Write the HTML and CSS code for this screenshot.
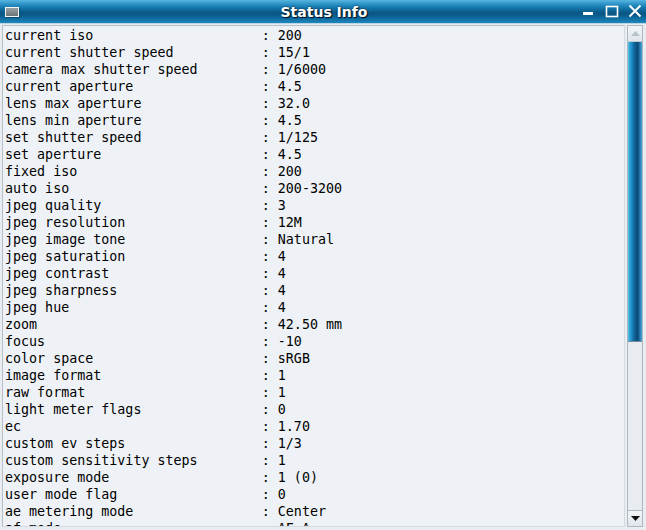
FILE: index.html
```html
<!DOCTYPE html>
<html>
<head>
<meta charset="utf-8">
<link rel="stylesheet" href="styles.css">
</head>
<body>
<div class="window">
  <div class="titlebar">
    <div class="appicon"></div>
    <div class="title">Status Info</div>
    <div class="controls">
      <svg class="ctl" width="14" height="14" viewBox="0 0 14 14"><rect x="1" y="8" width="10" height="3" fill="#fff"/></svg>
      <svg class="ctl" width="14" height="14" viewBox="0 0 14 14"><rect x="1.5" y="2.5" width="11" height="10" fill="none" stroke="#fff" stroke-width="1.6"/></svg>
      <svg class="ctl" width="14" height="14" viewBox="0 0 14 14"><path d="M1.5 1.5 L12.5 12.5 M12.5 1.5 L1.5 12.5" stroke="#fff" stroke-width="2"/></svg>
    </div>
  </div>
  <div class="body">
    <div class="textview">
      <div class="row"><span class="k">current iso</span><span>: 200</span></div>
      <div class="row"><span class="k">current shutter speed</span><span>: 15/1</span></div>
      <div class="row"><span class="k">camera max shutter speed</span><span>: 1/6000</span></div>
      <div class="row"><span class="k">current aperture</span><span>: 4.5</span></div>
      <div class="row"><span class="k">lens max aperture</span><span>: 32.0</span></div>
      <div class="row"><span class="k">lens min aperture</span><span>: 4.5</span></div>
      <div class="row"><span class="k">set shutter speed</span><span>: 1/125</span></div>
      <div class="row"><span class="k">set aperture</span><span>: 4.5</span></div>
      <div class="row"><span class="k">fixed iso</span><span>: 200</span></div>
      <div class="row"><span class="k">auto iso</span><span>: 200-3200</span></div>
      <div class="row"><span class="k">jpeg quality</span><span>: 3</span></div>
      <div class="row"><span class="k">jpeg resolution</span><span>: 12M</span></div>
      <div class="row"><span class="k">jpeg image tone</span><span>: Natural</span></div>
      <div class="row"><span class="k">jpeg saturation</span><span>: 4</span></div>
      <div class="row"><span class="k">jpeg contrast</span><span>: 4</span></div>
      <div class="row"><span class="k">jpeg sharpness</span><span>: 4</span></div>
      <div class="row"><span class="k">jpeg hue</span><span>: 4</span></div>
      <div class="row"><span class="k">zoom</span><span>: 42.50 mm</span></div>
      <div class="row"><span class="k">focus</span><span>: -10</span></div>
      <div class="row"><span class="k">color space</span><span>: sRGB</span></div>
      <div class="row"><span class="k">image format</span><span>: 1</span></div>
      <div class="row"><span class="k">raw format</span><span>: 1</span></div>
      <div class="row"><span class="k">light meter flags</span><span>: 0</span></div>
      <div class="row"><span class="k">ec</span><span>: 1.70</span></div>
      <div class="row"><span class="k">custom ev steps</span><span>: 1/3</span></div>
      <div class="row"><span class="k">custom sensitivity steps</span><span>: 1</span></div>
      <div class="row"><span class="k">exposure mode</span><span>: 1 (0)</span></div>
      <div class="row"><span class="k">user mode flag</span><span>: 0</span></div>
      <div class="row"><span class="k">ae metering mode</span><span>: Center</span></div>
      <div class="row"><span class="k">af mode</span><span>: AF-A</span></div>
    </div>
    <div class="scrollbar">
      <div class="sbtn"><svg width="9" height="5" viewBox="0 0 9 5"><path d="M0 5 L4.5 0 L9 5 Z" fill="#b8c4cc"/></svg></div>
      <div class="thumb"></div>
      <div class="track"></div>
      <div class="sbtn"><svg width="9" height="5" viewBox="0 0 9 5"><path d="M0 0 L4.5 5 L9 0 Z" fill="#111"/></svg></div>
    </div>
  </div>
</div>
</body>
</html>
```
FILE: styles.css
```css
html, body {
  margin: 0;
  padding: 0;
}
body {
  width: 646px;
  height: 530px;
  overflow: hidden;
  background: #e9edf1;
}
.window {
  display: flex;
  flex-direction: column;
  width: 646px;
  height: 530px;
}
.titlebar {
  position: relative;
  flex: 0 0 23px;
  display: flex;
  align-items: center;
  justify-content: center;
  background: linear-gradient(to bottom, #58b6e0 0px, #2d93c6 4px, #1276ab 8px, #0a5583 13px, #0c5f90 16px, #1476ab 20px, #2088bd 23px);
  border-bottom: 1px solid #bcd6e6;
}
.appicon {
  position: absolute;
  left: 5px;
  top: 7px;
  width: 12px;
  height: 8px;
  background: linear-gradient(to bottom, #9aa0a4, #6d7478);
  border: 1px solid #f4f6f8;
  box-shadow: 1px 1px 0 #0a4a70;
}
.title {
  font-family: "DejaVu Sans", sans-serif;
  font-weight: bold;
  font-size: 14px;
  color: #fff;
  text-shadow: 1px 1px 1px #03121e, 0 0 2px #061e32;
  padding-left: 2px;
}
.controls {
  position: absolute;
  right: 4px;
  top: 4px;
  display: flex;
  gap: 9px;
}
.ctl {
  display: block;
}
.body {
  flex: 1;
  display: flex;
  padding: 1px 3px 3px 2px;
  gap: 2px;
  min-height: 0;
}
.textview {
  flex: 1;
  background: #eef2f6;
  border: 1px solid #b7c0c8;
  border-right-color: #d4dbe0;
  border-bottom-color: #d4dbe0;
  padding: 1px 2px;
  overflow: hidden;
  font-family: "DejaVu Sans Mono", monospace;
  font-size: 13.33px;
  line-height: 17px;
  color: #000;
}
.row {
  display: flex;
  white-space: pre;
}
.k {
  width: 32ch;
  flex: 0 0 32ch;
}
.scrollbar {
  flex: 0 0 14px;
  display: flex;
  flex-direction: column;
  border: 1px solid #aeb8c0;
  background: #e6eaee;
}
.sbtn {
  flex: 0 0 15px;
  display: flex;
  align-items: center;
  justify-content: center;
  background: linear-gradient(to bottom, #f2f5f8, #dfe5ea);
  border-bottom: 1px solid #c2cad0;
}
.sbtn:last-child {
  border-bottom: none;
  border-top: 1px solid #aeb8c0;
}
.thumb {
  flex: 0 0 299px;
  background: linear-gradient(to right, #5fc0e4 0px, #2aa0d4 2px, #1a88c0 4px, #0e5c8e 7px, #0a4a76 10px, #2a7fb4 12px, #4aa6d6 14px);
  border-bottom: 1px solid #7a8a96;
}
.track {
  flex: 1;
  background: #e8ecf0;
}
```
